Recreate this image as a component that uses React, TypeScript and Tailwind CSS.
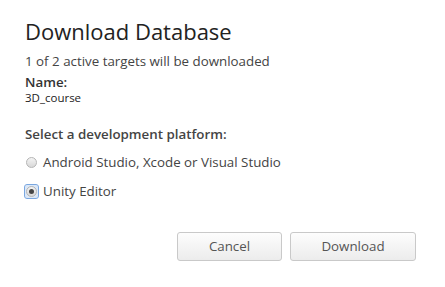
import React from 'react';

const Radio = ({ checked }: { checked?: boolean }) => (
    <span
        className={
            checked
                ? 'flex h-[13px] w-[13px] items-center justify-center rounded-[2px] outline outline-1 outline-[#7aa7e0] bg-[#dbe8f8]'
                : 'flex h-[13px] w-[13px] items-center justify-center'
        }
    >
        <span className="flex h-[11px] w-[11px] items-center justify-center rounded-full border border-[#b5b5b5] bg-gradient-to-b from-[#f4f4f4] to-[#d8d8d8]">
            {checked && <span className="h-[5px] w-[5px] rounded-full bg-[#444]" />}
        </span>
    </span>
);

export default function App() {
    return (
        <div className="h-[287px] w-[445px] bg-white font-['Open_Sans',sans-serif] text-[#333]">
            <div className="flex flex-col px-[25px] pt-[17px]">
                <h1 className="text-[22px] leading-[28px] text-[#222]">Download Database</h1>
                <p className="mt-[8px] text-[13.33px] leading-[17px] text-[#444]">1 of 2 active targets will be downloaded</p>
                <div className="mt-[5px] text-[13.33px] font-semibold leading-[15px] text-[#333]">Name:</div>
                <div className="mt-[1px] text-[11.5px] leading-[13px] text-[#222]">3D_course</div>

                <div className="mt-[22px] text-[13.33px] font-semibold leading-[17px] text-[#444]">Select a development platform:</div>

                <label className="mt-[11px] flex items-center gap-[5px] text-[13.33px] leading-[17px] text-[#444]">
                    <Radio />
                    <span>Android Studio, Xcode or Visual Studio</span>
                </label>
                <label className="mt-[12px] flex items-center gap-[5px] text-[13.33px] leading-[17px] text-[#444]">
                    <Radio checked />
                    <span>Unity Editor</span>
                </label>

                <div className="mt-[32px] flex justify-end gap-[8px] pr-[4px]">
                    <button className="h-[29px] w-[105px] rounded-[3px] border border-[#c9c9c9] bg-gradient-to-b from-[#fdfdfd] to-[#ececec] text-[13.33px] text-[#555]">
                        Cancel
                    </button>
                    <button className="h-[29px] w-[126px] rounded-[3px] border border-[#c9c9c9] bg-gradient-to-b from-[#fdfdfd] to-[#ececec] text-[13.33px] text-[#555]">
                        Download
                    </button>
                </div>
            </div>
        </div>
    );
}
